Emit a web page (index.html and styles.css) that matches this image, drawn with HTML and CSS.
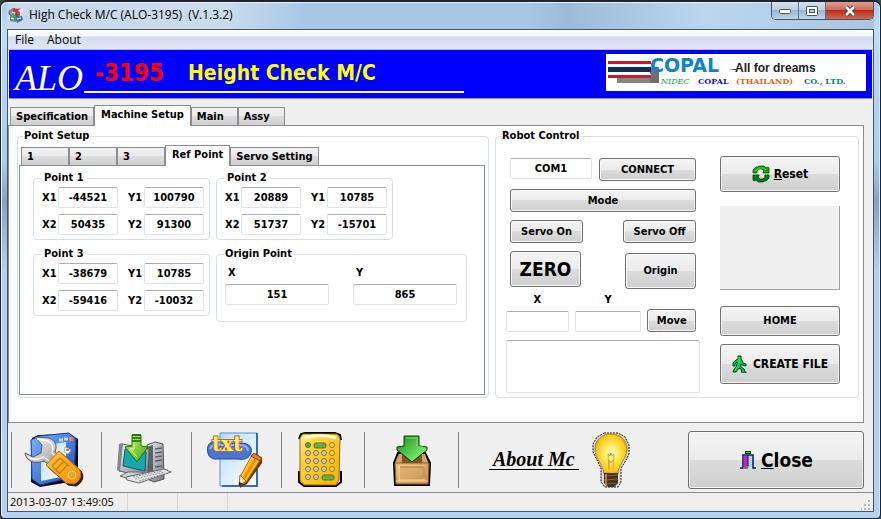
FILE: index.html
```html
<!DOCTYPE html>
<html lang="en">
<head>
<meta charset="utf-8">
<title>High Check M/C (ALO-3195)</title>
<link rel="stylesheet" href="styles.css">
</head>
<body>
<div class="window">
  <header class="titlebar">
    <svg class="app-icon" width="16" height="16" viewBox="0 0 16 16" aria-hidden="true">
      <path d="M1 4l5-3 3 3-1 4-4 2-3-3z" fill="#8a939c" stroke="#4c5560" stroke-width=".7"/>
      <path d="M6 2h8l-2 3-1 5H8V5H5z" fill="#c83c3c" stroke="#7c2020" stroke-width=".5"/>
      <path d="M10 3l5-2v4l-3 1z" fill="#e8eef2"/>
      <path d="M2 9l5-1 3 3-2 4-6-1z" fill="#4f9a6c"/>
      <path d="M7 10l7-1 1 4-6 3z" fill="#2f78b8"/>
      <path d="M3 11l3 1M9 12l4-1M4 5l3 1" stroke="#fff" stroke-width="1.2"/>
    </svg>
    <h1 class="title">High Check M/C (ALO-3195)&nbsp; (V.1.3.2)</h1>
    <div class="win-buttons">
      <button class="win-btn" aria-label="Minimize"><svg width="14" height="10" viewBox="0 0 14 10"><rect x="1.500" y="3.500" width="11" height="4" rx="1" fill="#fff" stroke="#4a5665"/></svg></button>
      <button class="win-btn" aria-label="Maximize"><svg width="14" height="12" viewBox="0 0 14 12"><rect x="1.500" y="1.500" width="11" height="9" rx="1" fill="#fff" stroke="#4a5665"/><rect x="4.500" y="4.500" width="5" height="3" fill="#b4cbe3" stroke="#4a5665"/></svg></button>
      <button class="win-btn win-close" aria-label="Close window"><svg width="14" height="12" viewBox="0 0 14 12"><path d="M3 2l8 8M11 2l-8 8" stroke="#5a3232" stroke-width="4.500"/><path d="M3 2l8 8M11 2l-8 8" stroke="#fff" stroke-width="2.500"/></svg></button>
    </div>
  </header>

  <div class="client">
    <nav class="menubar">
      <button class="menu-item">File</button>
      <button class="menu-item">About</button>
    </nav>

    <div class="banner">
      <span class="brand">ALO</span>
      <div class="banner-line">
        <span class="model">-3195</span>
        <span class="product">Height Check M/C</span>
      </div>
      <svg class="logo" width="260" height="37" viewBox="0 0 260 37" role="img" aria-label="Nidec Copal (Thailand) Co., Ltd.">
        <rect width="260" height="37" fill="#fff"/>
        <rect x="11" y="22" width="42" height="7" fill="#858585"/>
        <rect x="44" y="13" width="9" height="16" fill="#6c7178"/>
        <text x="44" y="18" class="logo-copal">COPAL</text>
        <rect x="2" y="7" width="43" height="3" fill="#c41a30"/>
        <rect x="2" y="13" width="43" height="5" fill="#0f2d55"/>
        <rect x="2" y="20" width="43" height="1" fill="#fff"/>
        <rect x="2" y="21" width="43" height="3" fill="#c41a30"/>
        <path d="M122 16l8-1v1h-8z" fill="#222"/>
        <text x="129" y="18" class="logo-motto">All for dreams</text>
        <text x="55" y="30" class="logo-name logo-nidec">NIDEC</text>
        <text x="92" y="30" class="logo-name logo-blue">COPAL</text>
        <text x="130" y="30" class="logo-name logo-orange">(THAILAND)</text>
        <text x="198" y="30" class="logo-name logo-teal">CO., LTD.</text>
      </svg>
    </div>

    <div class="tabs" role="tablist">
      <button class="tab" role="tab">Specification</button>
      <button class="tab active" role="tab" aria-selected="true">Machine Setup</button>
      <button class="tab tab-main" role="tab">Main</button>
      <button class="tab tab-main" role="tab">Assy</button>
    </div>

    <main class="page">
      <fieldset class="group">
        <legend>Point Setup</legend>
        <div class="setup">
          <div class="tabs inner-tabs" role="tablist">
            <button class="tab tab-number" role="tab">1</button>
            <button class="tab tab-number" role="tab">2</button>
            <button class="tab tab-number" role="tab">3</button>
            <button class="tab active" role="tab" aria-selected="true">Ref Point</button>
            <button class="tab" role="tab">Servo Setting</button>
          </div>
          <div class="ref-page">
            <fieldset class="group point">
              <legend>Point 1</legend>
              <div class="coords">
                <label>X1<input value="-44521"></label>
                <label>Y1<input value="100790"></label>
                <label>X2<input value="50435"></label>
                <label>Y2<input value="91300"></label>
              </div>
            </fieldset>
            <fieldset class="group point">
              <legend>Point 2</legend>
              <div class="coords">
                <label>X1<input value="20889"></label>
                <label>Y1<input value="10785"></label>
                <label>X2<input value="51737"></label>
                <label>Y2<input value="-15701"></label>
              </div>
            </fieldset>
            <fieldset class="group point">
              <legend>Point 3</legend>
              <div class="coords">
                <label>X1<input value="-38679"></label>
                <label>Y1<input value="10785"></label>
                <label>X2<input value="-59416"></label>
                <label>Y2<input value="-10032"></label>
              </div>
            </fieldset>
            <fieldset class="group origin">
              <legend>Origin Point</legend>
              <div class="origin-fields">
                <label>X<input value="151"></label>
                <label>Y<input value="865"></label>
              </div>
            </fieldset>
          </div>
        </div>
      </fieldset>

      <fieldset class="group">
        <legend>Robot Control</legend>
        <div class="robot">
          <div class="controls">
            <div class="row">
              <input class="port" value="COM1" aria-label="Port">
              <button class="btn grow">CONNECT</button>
            </div>
            <div class="row"><button class="btn grow">Mode</button></div>
            <div class="row spread">
              <button class="btn servo">Servo On</button>
              <button class="btn servo">Servo Off</button>
            </div>
            <div class="row spread tall">
              <button class="btn big zero">ZERO</button>
              <button class="btn big home-origin">Origin</button>
            </div>
            <div class="move">
              <label>X<input></label>
              <label>Y<input></label>
              <button class="btn">Move</button>
            </div>
            <textarea class="log" aria-label="Messages"></textarea>
          </div>
          <div class="actions">
            <button class="btn reset">
              <svg width="18" height="18" viewBox="0 0 18 18" aria-hidden="true">
                <path d="M1 8V5l3-3h2l1-1h5l2 2 2-1 1 1v5h-6V7l1-1-2-2H7L5 6v2z" fill="#12a512" stroke="#075507" stroke-width=".8"/>
                <path d="M17 10v3l-3 3h-2l-1 1H6l-2-2-2 1-1-1v-5h6v1l-1 1 2 2h3l2-2v-2z" fill="#077a18" stroke="#063c10" stroke-width=".8"/>
                <path d="M3 6l4-3h5l2 2" fill="none" stroke="#37dc37" stroke-width="1.200"/>
              </svg>
              <span><u>R</u>eset</span>
            </button>
            <div class="picture"></div>
            <button class="btn home">HOME</button>
            <button class="btn create">
              <svg width="15" height="18" viewBox="0 0 15 18" aria-hidden="true">
                <path d="M6 1h3v3l1 1 1 3 3 1v2l-4-1-1-1v3l3 2 1 3h1v1h-4l-1-4-2-1-3 4H1v-1l3-4 1-3V7L3 9v2H1V8l3-3 2-1z" fill="#12c93a" stroke="#063c38"/>
                <path d="M7 2v7M6 11l-3 4" stroke="#49f069"/>
              </svg>
              <span>CREATE FILE</span>
            </button>
          </div>
        </div>
      </fieldset>
    </main>

    <div class="toolbar">
      <button class="tool" aria-label="Settings">
        <svg width="60" height="56" viewBox="0 0 60 56">
          <defs>
            <linearGradient id="blue" x2="1" y2="1"><stop stop-color="#7db4ff"/><stop offset="1" stop-color="#1749bd"/></linearGradient>
            <linearGradient id="pane" y2="1" x2="1"><stop stop-color="#b9dcff"/><stop offset="1" stop-color="#fff"/></linearGradient>
            <linearGradient id="steel" x2="1" y2="1"><stop stop-color="#fff"/><stop offset="1" stop-color="#8c8c90"/></linearGradient>
            <linearGradient id="orange" x2="1" y2="1"><stop stop-color="#ffcb3d"/><stop offset="1" stop-color="#f08a08"/></linearGradient>
          </defs>
          <path d="M8 6l6-3L46 2l8 5v39l-8 4-30 5-9-5z" fill="#0a0a14"/>
          <path d="M7 8l8-4 30-3 7 6-2 38-34 8-8-6z" fill="url(#blue)" stroke="#153d9c"/>
          <path d="M17 14l25-4v34l-25 5z" fill="url(#pane)"/>
          <path d="M35 8h4M40 7h4" stroke="#b9dcff" stroke-width="3"/><path d="M45 7h4" stroke="#f27b66" stroke-width="4"/>
          <path d="M41 15l6 3-3 4-4-2z" fill="#fff" stroke="#9ab"/><path d="M42 18h3" stroke="#e8741c" stroke-width="2"/>
          <path d="M11 5l14 1c8 3 8 9 6 14l9 7-10 10-10-8C11 33 2 29 1 21l8 4 8-4 1-8z" fill="url(#steel)" stroke="#55585f"/>
          <path d="M13 7l11 2c5 3 6 7 4 12l8 7M4 25c6 4 11 2 16 0l9 7" fill="none" stroke="#fff" stroke-width="1.500"/>
          <path d="M22 33l13-14 20 18c4 6 1 12-5 15l-8-1z" fill="#2a1a08" stroke="#2a1a08" transform="translate(2 2)"/>
          <path d="M22 33l13-14 20 18c4 6 1 12-5 15l-8-1z" fill="url(#orange)" stroke="#bd6b04"/>
          <path d="M28 34l8-8M32 38l8-9M36 41l8-9M28 34l8 8M36 26l9 8" stroke="#d97b08" stroke-width="1.500"/>
          <circle cx="48" cy="43" r="4" fill="#f5a21d" stroke="#ffe08a"/>
        </svg>
      </button>
      <button class="tool" aria-label="Download to computer">
        <svg width="56" height="56" viewBox="0 0 56 56">
          <defs>
            <linearGradient id="grey" x2="1" y2="1"><stop stop-color="#f4f4f6"/><stop offset="1" stop-color="#74767c"/></linearGradient>
            <linearGradient id="lime" y2="1"><stop stop-color="#d8fb63"/><stop offset="1" stop-color="#36a51c"/></linearGradient>
          </defs>
          <path d="M31 13l8-3 8 2 1 35-10 3-9-4z" fill="url(#grey)" stroke="#4d4f55"/>
          <path d="M37 13v34l-7-2V15z" fill="#606269"/>
          <path d="M39 17l7-1M39 21l7-1M39 25l7-1M39 29l7-1M39 35l7-1" stroke="#5d6067" stroke-width="1.500"/>
          <path d="M6 12l27 5-1 28-29-6z" fill="url(#grey)" stroke="#595b61"/>
          <path d="M3 12l4-1-3 29-3-2z" fill="#85878d"/>
          <path d="M9 17l21 3-1 19-22-5z" fill="#17a7ad" stroke="#096068"/>
          <path d="M12 40h14l6 5-11 5-17-6z" fill="url(#grey)" stroke="#666"/>
          <path d="M10 45l38-8 7 3-32 11-12-3z" fill="#e6e6ea" stroke="#65676c"/>
          <path d="M17 45l29-6M19 47l29-7M23 49l28-8" stroke="#92949a" stroke-dasharray="2 1"/>
          <path d="M16 3h9v11l7 1-11 15-12-15 7-1z" fill="url(#lime)" stroke="#15750d"/>
          <path d="M16 3h9M16 6h9M16 9h9" stroke="#16670c" stroke-width="1.500"/>
          <path d="M18 11v6h-4l7 8" fill="none" stroke="#f0ff99"/>
        </svg>
      </button>
      <button class="tool" aria-label="Text file">
        <svg width="58" height="56" viewBox="0 0 58 56">
          <path d="M15 1h37v53H15z" fill="url(#pane)" stroke="#548fd8"/>
          <path d="M52 1v53H17" fill="none" stroke="#326db5" stroke-width="2"/>
          <path d="M3 14C5 9 10 9 14 11h22c8 0 13 5 9 12-2 4-7 5-12 4H12C5 28 1 22 3 14z" fill="#4a75d6" stroke="#23469a"/>
          <path d="M5 17c2-5 7-6 12-4h17c6 0 9 2 9 6" fill="none" stroke="#8fb6ff" stroke-width="2"/>
          <text x="7" y="19" class="txt-label">txt</text>
          <path d="M47 25l4-3 6 4v5L42 52l-7 4 1-11z" fill="#6b390b"/>
          <path d="M47 23l8 5-14 22-7 4 2-11z" fill="#ffc21f" stroke="#b46b08"/>
          <path d="M51 26L38 48" stroke="#f28b10" stroke-width="3"/>
          <path d="M35 43l6 6-7 5z" fill="#ffe0a8" stroke="#9a6420"/><path d="M34 50v4l4-2z" fill="#222"/>
          <path d="M46 24l3-3 8 5-2 3z" fill="#f07b18" stroke="#75410f"/>
        </svg>
      </button>
      <button class="tool" aria-label="Calculator">
        <svg width="44" height="56" viewBox="0 0 44 56">
          <defs>
            <linearGradient id="gold" y2="1"><stop stop-color="#fff0a0"/><stop offset=".25" stop-color="#ffd43f"/><stop offset="1" stop-color="#f7b000"/></linearGradient>
            <g id="keys" fill="#c9ccba" stroke="#80764b"><circle cx="10" cy="0" r="2.500"/><circle cx="18" cy="0" r="2.500"/><circle cx="26" cy="0" r="2.500"/><circle cx="34" cy="0" r="2.500" fill="#ffd04e" stroke="#a37309"/></g>
          </defs>
          <path d="M1 7l2-5 4-1h30l5 2 1 5M1 39v11l5 4h32l5-4V39" fill="none" stroke="#000" stroke-width="2"/>
          <path d="M5 2h34l3 4-1 42-3 5H6l-4-5V6z" fill="url(#gold)" stroke="#8d6813"/>
          <path d="M6 6c10-3 22-3 32 0" fill="none" stroke="#fffbd0" stroke-width="3"/>
          <circle cx="10" cy="13" r="2.500" fill="#58a542" stroke="#5d7128"/><rect x="16" y="11" width="12" height="5" rx="2" fill="#66ad4d" stroke="#5d7128"/><circle cx="34" cy="13" r="2.500" fill="#ffd04e" stroke="#a37309"/>
          <use href="#keys" y="21"/><use href="#keys" y="29"/><use href="#keys" y="37"/>
          <circle cx="10" cy="45" r="2.500" fill="#c9ccba" stroke="#80764b"/><circle cx="18" cy="45" r="2.500" fill="#c9ccba" stroke="#80764b"/><rect x="24" y="43" width="12" height="5" rx="2" fill="#66ad4d" stroke="#5d7128"/>
        </svg>
      </button>
      <button class="tool" aria-label="Import to box">
        <svg width="40" height="56" viewBox="0 0 40 56">
          <defs>
            <linearGradient id="wood" y2="1"><stop stop-color="#e9bd7d"/><stop offset="1" stop-color="#c78f4d"/></linearGradient>
            <linearGradient id="green" y2="1"><stop stop-color="#168f18"/><stop offset=".7" stop-color="#6ee066"/><stop offset="1" stop-color="#dcf7c8"/></linearGradient>
          </defs>
          <path d="M6 21h27l5 10-1 22H3L2 31z" fill="#9a6a38" stroke="#000" stroke-width="2"/>
          <path d="M7 22h26l3 9H3z" fill="#805228"/><path d="M7 22l-4 9h7V22zM33 22l3 9h-6V22z" fill="#d5a469"/>
          <path d="M3 31h34l-1 21H4z" fill="url(#wood)" stroke="#8c5b28"/>
          <path d="M7 34h25v14H7zM4 49h32" fill="none" stroke="#f5d49c"/><path d="M8 35h24v12" fill="none" stroke="#ad7436"/>
          <path d="M12 4h15v10l8 1v3L20 30 5 18v-3l7-1z" fill="url(#green)" stroke="#063c08"/>
          <path d="M14 6h11v9h6" fill="none" stroke="#7bdc74"/>
        </svg>
      </button>
      <div class="about">
        <a class="about-link" href="#about">About Mc</a>
        <svg width="38" height="56" viewBox="0 0 38 56" aria-hidden="true">
          <defs><radialGradient id="glow" cx=".5" cy=".48" r=".6"><stop stop-color="#fffdd0"/><stop offset=".35" stop-color="#ffec62"/><stop offset=".75" stop-color="#fbc71b"/><stop offset="1" stop-color="#ba7b13"/></radialGradient></defs>
          <path d="M12 1h14l7 4 4 8v9l-4 8-4 6v14l-3 5H13l-4-5V36l-4-8-4-8V12l4-7z" fill="#d8d8d8" stroke="#111" stroke-dasharray="2 1"/>
          <path d="M19 2C9 2 3 9 3 17c0 10 8 15 9 25h14c0-10 9-15 9-25C35 9 29 2 19 2z" fill="url(#glow)" stroke="#b4841f"/>
          <path d="M17 37l-1-15 2 2 1-3 1 3 2-2-1 15M17 37v-9l2 3 2-3" fill="none" stroke="#d3a63c"/>
          <path d="M12 41h14v10l-4 4h-6l-4-4z" fill="#46301c"/>
          <path d="M12 44l14-1M12 48l14-1M13 52l11-1" stroke="#806040"/>
          <path d="M14 42v11" stroke="#c99c50" stroke-width="1.500"/>
        </svg>
      </div>
      <button class="btn close">
        <svg width="18" height="18" viewBox="0 0 18 18" aria-hidden="true">
          <rect x="6.500" y=".5" width="5" height="2" fill="#3ee03e" stroke="#073c20"/>
          <path d="M1 17h3V4h10v13h3" fill="none" stroke="#10105c" stroke-width="1.500"/>
          <path d="M5 5h4v10l-4 2z" fill="#c421c4"/><path d="M9 5h4v12H9z" fill="#baf4f8"/>
          <path d="M10 6v11M12 5v11" stroke="#5badd7" stroke-dasharray="1 1"/><path d="M9 4v12" stroke="#10105c"/><path d="M4 17h5" stroke="#777" stroke-width="2"/>
        </svg>
        <span><u>C</u>lose</span>
      </button>
    </div>

    <footer class="statusbar">
      <span class="cell cell-time">2013-03-07 13:49:05</span>
      <span class="cell"></span>
      <span class="cell"></span>
      <svg class="grip" width="10" height="10" viewBox="0 0 10 10" aria-hidden="true"><path d="M7 0h2v2H7zM7 4h2v2H7zM7 8h2v2H7zM3 4h2v2H3zM3 8h2v2H3zM0 8h1v2H0z" fill="#b9b5b5"/></svg>
    </footer>
  </div>
</div>
</body>
</html>
```
FILE: styles.css
```css
* { box-sizing: border-box; }

body {
  margin: 0;
  background: #3c4650;
  color: #000;
  font: bold 11px/14px "DejaVu Sans Condensed", "DejaVu Sans", sans-serif;
}

button, input, textarea { font: inherit; color: inherit; margin: 0; }
svg { display: block; flex: none; }

.window {
  display: flex;
  flex-direction: column;
  min-height: 100vh;
  padding: 0 6px 6px;
  border: solid #1b2430;
  border-width: 2px 1px 1px;
  border-radius: 7px 7px 5px 5px;
  background: linear-gradient(#a9c9ea, #bfdcf8 28px, #a9cbef 160px, #86a3c4 200px, #b4d2f2 270px, #b4d2f2);
  box-shadow: inset 1px 1px 0 #e8f3fd, inset -1px 0 0 #d5e9fb;
}

.titlebar {
  display: flex;
  align-items: flex-start;
  height: 26px;
  margin: 1px 0 0;
  padding-left: 1px;
  background: linear-gradient(90deg, #c9d9e9, #cbdbeb 220px, #a7c7e7 300px, #a7c7e7 520px, #9dbad8 560px, #bdd6ee 700px, #aac5e0);
}
.app-icon { margin: 4px 5px 0 0; }
.title {
  flex: 1;
  margin: 3px 0 0;
  font: 12px/18px "Open Sans", "Noto Sans", sans-serif;
}
.win-buttons {
  display: flex;
  height: 18px;
  margin-top: -1px;
  border: 1px solid #43566b;
  border-top: 0;
  border-radius: 0 0 5px 5px;
  overflow: hidden;
}
.win-btn {
  display: grid;
  place-items: center;
  width: 27px;
  padding: 0;
  border: 0;
  border-right: 1px solid #5d7389;
  background: linear-gradient(#d5e2ef, #bccfe2 45%, #9db6cf 50%, #bcd3e8);
}
.win-close {
  width: 47px;
  border-right: 0;
  background: linear-gradient(#e0a092, #cf6a58 45%, #b72f1c 50%, #d2694c);
}

.client {
  display: flex;
  flex: 1;
  flex-direction: column;
  border: 1px solid #43566b;
  background: #f0f0f0;
}

.menubar {
  display: flex;
  gap: 13px;
  height: 20px;
  padding-left: 7px;
  border-bottom: 1px solid #b7bccb;
  background: linear-gradient(#fff, #f2f5fb 6px, #d6dcee 7px, #e2e6f5);
}
.menu-item {
  padding: 0;
  border: 0;
  background: none;
  font: 12px/18px "Open Sans", "Noto Sans", sans-serif;
}

.banner {
  display: flex;
  align-items: flex-start;
  height: 49px;
  margin: 0 1px;
  padding: 4px 6px 0;
  border-bottom: 1px solid #8f8fd8;
  background: #00f;
}
.brand {
  width: 69px;
  color: #fff;
  font: italic 36px/48px "Liberation Serif", serif;
}
.banner-line {
  display: flex;
  gap: 24px;
  width: 380px;
  height: 39px;
  padding-left: 11px;
  border-bottom: 2px solid #fff;
  font-size: 21px;
  line-height: 38px;
  white-space: nowrap;
}
.model { color: #f00; font-size: 24px; }
.product { color: #ff0; }
.logo { margin-left: auto; }
.logo-copal { font: bold 19px "DejaVu Sans", sans-serif; fill: #0d84cc; }
.logo-motto { font: bold 12px "Liberation Sans", sans-serif; fill: #222; }
.logo-name { font: bold 8px "DejaVu Serif", serif; }
.logo-nidec { font-style: italic; font-weight: normal; fill: #12a04b; }
.logo-blue { fill: #1515b8; }
.logo-orange { fill: #e06812; }
.logo-teal { fill: #137886; }

.tabs {
  display: flex;
  align-items: flex-end;
  height: 20px;
  margin-top: 6px;
  padding-left: 2px;
}
.tab {
  height: 18px;
  padding: 0 5px;
  border: 1px solid #898c95;
  border-bottom: 0;
  background: linear-gradient(#f2f2f2, #ebebeb 50%, #ddd 50%, #cfcfcf);
  text-align: left;
  white-space: nowrap;
}
.tab.active {
  z-index: 1;
  height: 21px;
  margin-bottom: -1px;
  padding: 0 6px 2px;
  background: #fff;
}
.tab-main { width: 47px; }
.tab-number { width: 48px; }

.page {
  display: grid;
  flex: 1;
  grid-template-columns: minmax(0, 472fr) minmax(0, 364fr);
  gap: 6px;
  margin: 0 9px 0 0;
  padding: 3px 4px 24px 8px;
  border: 1px solid #898c95;
  background: #fff;
}
.group {
  min-width: 0;
  margin: 0;
  padding: 0;
  border: 1px solid #d5dfe5;
  border-radius: 4px;
}
.group > legend { margin-left: 5px; padding: 0 1px; }

.setup {
  display: flex;
  flex-direction: column;
  height: 100%;
  padding: 2px 3px 2px 1px;
}
.inner-tabs { flex: none; margin-top: 0; }
.ref-page {
  display: grid;
  flex: 1;
  grid-template-columns: 177px 251px;
  align-content: start;
  align-items: start;
  gap: 7px 6px;
  padding: 5px 13px;
  border: 1px solid #898c95;
}
.ref-page .point { width: 177px; }
.group.point > legend { margin-left: 7px; padding: 0 3px; }
.group.origin > legend { margin-left: 7px; }
.coords {
  display: grid;
  grid-template-columns: 1fr 1fr;
  gap: 6px 10px;
  padding: 2px 5px 4px 8px;
}
.coords label { display: flex; align-items: center; }
.coords input { width: 60px; margin-left: auto; }
.origin-fields {
  display: grid;
  grid-template-columns: 1fr 1fr;
  gap: 24px;
  padding: 5px 9px 16px 8px;
}
.origin-fields label, .move label { display: flex; flex-direction: column; gap: 4px; }
.origin-fields label { text-indent: 3px; }

input, textarea {
  width: 100%;
  min-width: 0;
  height: 21px;
  padding: 0 2px;
  border: 1px solid #e2e3ea;
  border-top-color: #abadb3;
  border-radius: 2px;
  background: #fff;
  text-align: center;
  text-indent: 0;
}

.btn {
  display: flex;
  align-items: center;
  justify-content: center;
  height: 23px;
  padding: 0;
  border: 1px solid #707070;
  border-radius: 3px;
  background: linear-gradient(#f4f4f4, #ebebeb 50%, #dcdcdc 50%, #cfcfcf);
  box-shadow: inset 0 0 0 1px #f8f8f8;
  white-space: nowrap;
}
.grow { flex: 1; }

.robot {
  display: flex;
  justify-content: space-between;
  gap: 20px;
  padding: 13px 18px 3px 10px;
}
.controls {
  display: flex;
  flex: 1;
  flex-direction: column;
  gap: 8px;
  padding-top: 2px;
}
.row { display: flex; gap: 7px; padding: 0 4px; }
.spread { justify-content: space-between; }
.port { width: 82px; }
.servo { width: 73px; }
.big { width: 71px; height: 36px; }
.zero { font-size: 19px; }
.tall { height: 38px; }
.home-origin { align-self: flex-end; }
.move {
  display: grid;
  grid-template-columns: 62fr 66fr 48fr;
  align-items: end;
  gap: 6px;
  padding-right: 4px;
  margin-top: -4px;
  text-align: center;
}
.log { height: 53px; resize: none; text-align: left; }

.actions { display: flex; flex-direction: column; width: 120px; }
.reset { gap: 4px; height: 36px; font-size: 12px; }
.picture {
  height: 84px;
  margin: 14px 0 16px;
  border: solid #a0a0a0;
  border-width: 0 1px 1px 0;
  background: #f0f0f0;
}
.home { height: 30px; }
.create { gap: 6px; height: 40px; margin-top: 8px; font-size: 12px; }

.toolbar {
  display: flex;
  align-items: center;
  height: 70px;
  padding: 4px 9px 0 3px;
  border-bottom: 1px solid #898c95;
}
.tool {
  display: flex;
  align-items: center;
  justify-content: center;
  width: 90px;
  height: 56px;
  padding: 0 6px 0 0;
  border: 0;
  border-left: 1px solid #808080;
  background: none;
}
.tool:nth-child(4) { width: 83px; }
.tool:nth-child(5) { width: 94px; padding: 0; }
.txt-label {
  font: bold 20px "DejaVu Serif", serif;
  fill: #ffe58a;
  stroke: #a8741c;
  stroke-width: 2px;
  paint-order: stroke;
}
.about {
  display: flex;
  flex: 1;
  align-items: center;
  gap: 13px;
  height: 56px;
  padding-left: 30px;
  border-left: 1px solid #808080;
}
.about-link {
  padding: 0 4px;
  border-bottom: 1px solid #000;
  color: #000;
  font: italic bold 20px/20px "Liberation Serif", serif;
  text-decoration: none;
  white-space: nowrap;
}
.close {
  gap: 4px;
  width: 176px;
  height: 58px;
  font-size: 19px;
  line-height: 24px;
}

.statusbar {
  display: flex;
  align-items: stretch;
  height: 18px;
  background: #f0eded;
  font: 11px/18px "Open Sans", "Noto Sans", sans-serif;
}
.cell { width: 50px; border-right: 1px solid #d7d7d7; }
.cell-time { width: 120px; padding-left: 2px; }
.grip { margin: 7px 2px 0 auto; }
```
